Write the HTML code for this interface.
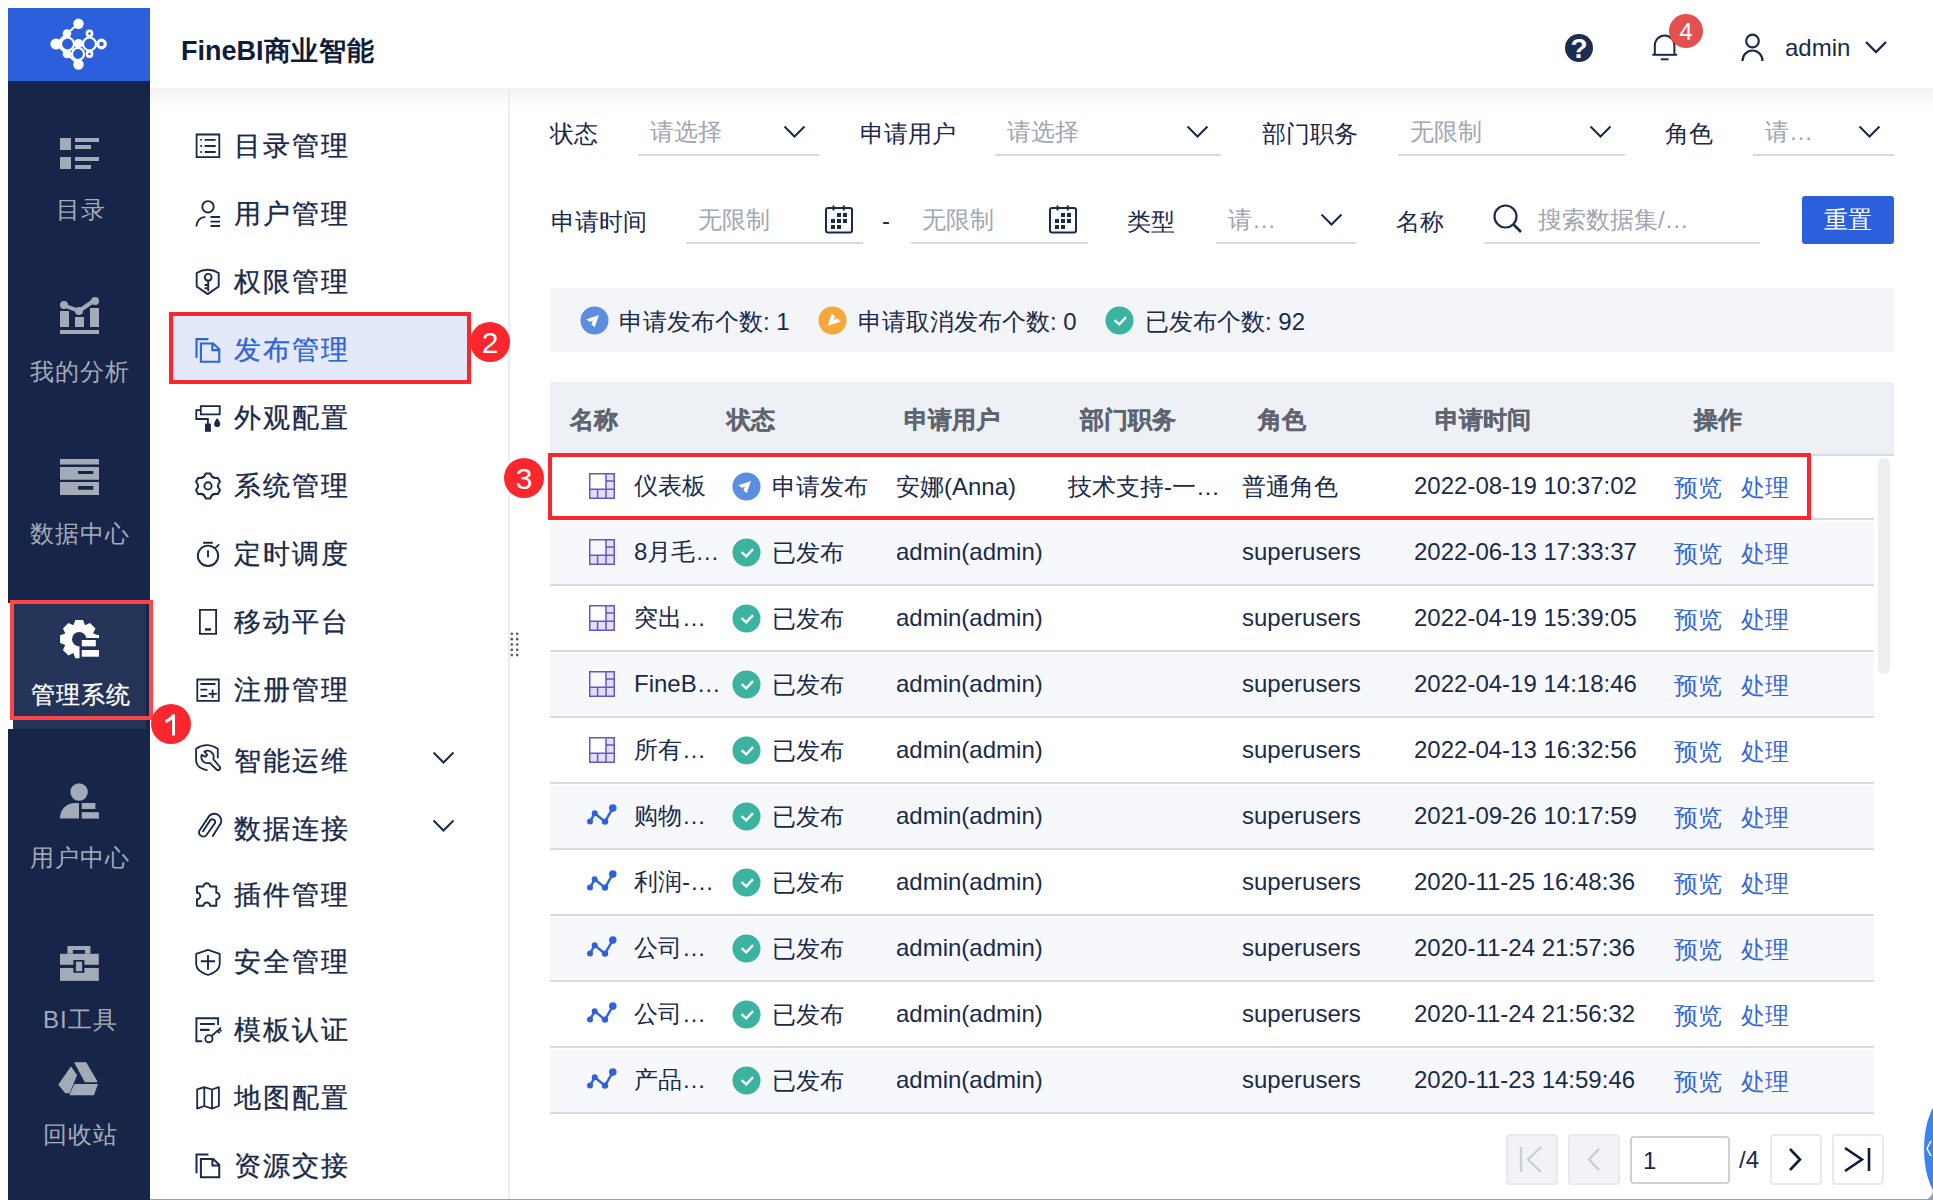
<!DOCTYPE html><html><head><meta charset="utf-8"><style>
html,body{margin:0;padding:0;width:1933px;height:1200px;overflow:hidden;background:#fff;position:relative;font-family:"Liberation Sans",sans-serif}
.t{position:absolute;white-space:nowrap;line-height:40px}
</style></head><body>
<div style="position:absolute;left:8px;top:8px;width:142px;height:73px;background:#2b5fdb"></div>
<div style="position:absolute;left:8px;top:81px;width:142px;height:1119px;background:#172548"></div>
<svg style="position:absolute;left:45px;top:15px;" width="65" height="60" viewBox="0 0 65 60"><g fill="#fff" stroke="#fff">
<g fill="none" stroke-width="2.2">
<circle cx="22.5" cy="29" r="6.5"/><circle cx="44.5" cy="29" r="6.5"/><circle cx="33" cy="39" r="6"/>
<path d="M33.5 8.75 L22 18.5 L11 29 L22 39 L33.5 49.5"/>
</g>
<circle cx="33.5" cy="8.75" r="5.2" stroke="none"/>
<circle cx="33.5" cy="49.5" r="5.2" stroke="none"/>
<circle cx="11" cy="29" r="5.6" stroke="none"/>
<circle cx="22" cy="18.5" r="4.3" stroke="none"/>
<circle cx="22" cy="39" r="4.3" stroke="none"/>
<circle cx="33.5" cy="28.5" r="4.6" stroke="none"/>
<circle cx="44.5" cy="18.5" r="2.6" fill="#2b5fdb" stroke-width="2.6"/>
<circle cx="44.5" cy="39" r="2.6" fill="#2b5fdb" stroke-width="2.6"/>
<circle cx="56.5" cy="29" r="3.8" fill="#2b5fdb" stroke-width="3.2"/>
</g></svg>
<div style="position:absolute;left:8px;top:603px;width:5px;height:126px;background:#fff"></div>
<div style="position:absolute;left:13px;top:603px;width:133px;height:126px;background:#243459"></div>
<svg style="position:absolute;left:60px;top:138px;" width="40" height="32" viewBox="0 0 40 32"><g fill="#a3aab8"><rect x="0" y="0" width="11" height="12"/><rect x="0" y="19" width="11" height="12"/>
<rect x="15" y="0" width="24" height="4"/><rect x="15" y="7" width="16" height="4"/>
<rect x="15" y="19" width="24" height="4"/><rect x="15" y="27" width="16" height="4"/></g></svg>
<div class="t" style="left:56px;top:190px;font-size:24px;color:#a3aab8;font-weight:normal;letter-spacing:1px;">目录</div>
<svg style="position:absolute;left:60px;top:297px;" width="40" height="37" viewBox="0 0 40 37"><g fill="#a3aab8"><rect x="0" y="14" width="9" height="16"/><rect x="15" y="20" width="9" height="10"/><rect x="30" y="11" width="9" height="19"/>
<rect x="0" y="33" width="39" height="4"/><path d="M3 8 L19 14 L35 3" stroke="#a3aab8" stroke-width="4" fill="none"/>
<circle cx="4" cy="8" r="4"/><circle cx="19" cy="14" r="4"/><circle cx="35" cy="4" r="4"/></g></svg>
<div class="t" style="left:30px;top:352px;font-size:24px;color:#a3aab8;font-weight:normal;letter-spacing:1.0px;">我的分析</div>
<svg style="position:absolute;left:60px;top:459px;" width="40" height="37" viewBox="0 0 40 37"><g fill="#a3aab8"><rect x="0" y="0" width="39" height="5.5"/>
<path d="M0 8 H39 V20.8 H0 Z M18 12 V15 H33.3 V12 Z" fill-rule="evenodd"/>
<path d="M0 23 H39 V36 H0 Z M18 27 V30.7 H33.3 V27 Z" fill-rule="evenodd"/></g></svg>
<div class="t" style="left:30px;top:514px;font-size:24px;color:#a3aab8;font-weight:normal;letter-spacing:1.0px;">数据中心</div>
<svg style="position:absolute;left:55px;top:615px;" width="50" height="50" viewBox="0 0 50 50"><path d="M18.7 9.7 L20.3 5.1 L28.1 5.1 L29.7 9.7 L30.6 10.1 L35.0 7.9 L40.5 13.4 L38.3 17.8 L38.7 18.7 L43.3 20.3 L43.3 28.1 L38.7 29.7 L38.3 30.6 L40.5 35.0 L35.0 40.5 L30.6 38.3 L29.7 38.7 L28.1 43.3 L20.3 43.3 L18.7 38.7 L17.8 38.3 L13.4 40.5 L7.9 35.0 L10.1 30.6 L9.7 29.7 L5.1 28.1 L5.1 20.3 L9.7 18.7 L10.1 17.8 L7.9 13.4 L13.4 7.9 L17.8 10.1 Z" fill="#fff"/><circle cx="24.2" cy="24.2" r="7.2" fill="#243459"/><rect x="24.5" y="23" width="25.5" height="27" fill="#243459"/><rect x="26.8" y="25" width="14" height="6.3" fill="#fff"/><rect x="26.8" y="35" width="17.2" height="6.7" fill="#fff"/><rect x="31" y="20" width="13" height="3" fill="#fff"/></svg>
<div class="t" style="left:30.5px;top:675px;font-size:24px;color:#ffffff;font-weight:normal;letter-spacing:1.0px;-webkit-text-stroke:0.3px #fff">管理系统</div>
<svg style="position:absolute;left:60px;top:783px;" width="40" height="37" viewBox="0 0 40 37"><g fill="#a3aab8"><circle cx="19.1" cy="9" r="8.7"/><path d="M0 35.6 C0 26 6 20 16 20 H19 V35.6 Z"/>
<rect x="21.7" y="20" width="13.7" height="6"/><rect x="21.7" y="29.2" width="17.2" height="6.4"/></g></svg>
<div class="t" style="left:30px;top:838px;font-size:24px;color:#a3aab8;font-weight:normal;letter-spacing:1.0px;">用户中心</div>
<svg style="position:absolute;left:60px;top:945px;" width="40" height="37" viewBox="0 0 40 37"><g fill="#a3aab8"><path d="M7.4 1 H30.4 V8.8 H24.9 V5.1 H12.9 V8.8 H7.4 Z"/>
<rect x="0" y="8.8" width="38.8" height="11"/><rect x="0" y="23" width="38.8" height="12.9"/>
<rect x="13.4" y="15" width="11" height="12.8" fill="#172548"/><rect x="15.9" y="16.6" width="6.2" height="9.6"/></g></svg>
<div class="t" style="left:43px;top:1000px;font-size:24px;color:#a3aab8;font-weight:normal;letter-spacing:1px;">BI工具</div>
<svg style="position:absolute;left:50px;top:1050px;" width="50" height="50" viewBox="0 0 50 50"><g fill="#a3aab8" stroke="#a3aab8" stroke-width="1.2" stroke-linejoin="round"><path d="M25 12.8 H35.8 L46.8 31.6 H35.2 Z"/><path d="M21 17.3 L26.4 25.2 L19.3 42.6 L15.5 42.6 L9 34.5 Z"/><path d="M24.8 34.6 H47.2 L43.6 44.6 H20.2 Z"/></g></svg>
<div class="t" style="left:42.5px;top:1115px;font-size:24px;color:#a3aab8;font-weight:normal;letter-spacing:1.2px;">回收站</div>
<div style="position:absolute;left:150px;top:88px;width:1783px;height:20px;background:linear-gradient(#f1f2f5,#ffffff)"></div>
<div class="t" style="left:181px;top:30.6px;font-size:27px;color:#0e1c3c;font-weight:bold;letter-spacing:0px;">FineBI<span style="letter-spacing:0.9px">商业智能</span></div>
<svg style="position:absolute;left:1565px;top:34px;" width="28" height="28" viewBox="0 0 28 28"><circle cx="14" cy="14" r="14" fill="#1d2d4f"/><text x="14" y="24" text-anchor="middle" font-family="Liberation Sans" font-weight="bold" font-size="28" fill="#fff">?</text></svg>
<svg style="position:absolute;left:1650px;top:30px;" width="32" height="34" viewBox="0 0 32 34"><g fill="none" stroke="#1a2a4a" stroke-width="2"><path d="M4.8 24.8 V15.2 A9.8 9.6 0 0 1 24.4 15.2 V24.8"/><path d="M2.3 24.8 H27.2"/><path d="M10.8 29.3 H18.6"/></g></svg>
<svg style="position:absolute;left:1669px;top:14px;" width="34" height="34" viewBox="0 0 34 34"><circle cx="17" cy="17" r="17" fill="#e45050"/><text x="17" y="26" text-anchor="middle" font-family="Liberation Sans" font-size="24" fill="#fff">4</text></svg>
<svg style="position:absolute;left:1740px;top:33px;" width="26" height="29" viewBox="0 0 26 29"><g fill="none" stroke="#1a2a4a" stroke-width="2.2"><circle cx="12.5" cy="8" r="6.3"/><path d="M2.5 28 A10 10.5 0 0 1 22.5 28"/></g></svg>
<div class="t" style="left:1785px;top:28px;font-size:24px;color:#1a2a4a;font-weight:normal;letter-spacing:0px;">admin</div>
<svg style="position:absolute;left:1864px;top:40px;" width="24" height="15" viewBox="0 0 24 15"><path d="M2 2 L12 12 L22 2" fill="none" stroke="#1a2a4a" stroke-width="2.4"/></svg>
<div style="position:absolute;left:508px;top:88px;width:2px;height:1112px;background:#eceef2"></div>
<div style="position:absolute;left:169px;top:312px;width:302px;height:72px;background:#e2e9fb;border:4px solid #fc262e;box-sizing:border-box"></div>
<div class="t" style="left:234px;top:126.0px;font-size:27px;color:#1a2a4a;font-weight:normal;letter-spacing:2.1px;-webkit-text-stroke:0.3px #1a2a4a">目录管理</div>
<div class="t" style="left:234px;top:194.0px;font-size:27px;color:#1a2a4a;font-weight:normal;letter-spacing:2.1px;-webkit-text-stroke:0.3px #1a2a4a">用户管理</div>
<div class="t" style="left:234px;top:262.0px;font-size:27px;color:#1a2a4a;font-weight:normal;letter-spacing:2.1px;-webkit-text-stroke:0.3px #1a2a4a">权限管理</div>
<div class="t" style="left:234px;top:330.0px;font-size:27px;color:#2f63d8;font-weight:normal;letter-spacing:2.1px;-webkit-text-stroke:0.3px #2f63d8">发布管理</div>
<div class="t" style="left:234px;top:398.0px;font-size:27px;color:#1a2a4a;font-weight:normal;letter-spacing:2.1px;-webkit-text-stroke:0.3px #1a2a4a">外观配置</div>
<div class="t" style="left:234px;top:466.0px;font-size:27px;color:#1a2a4a;font-weight:normal;letter-spacing:2.1px;-webkit-text-stroke:0.3px #1a2a4a">系统管理</div>
<div class="t" style="left:234px;top:534.0px;font-size:27px;color:#1a2a4a;font-weight:normal;letter-spacing:2.1px;-webkit-text-stroke:0.3px #1a2a4a">定时调度</div>
<div class="t" style="left:234px;top:602.0px;font-size:27px;color:#1a2a4a;font-weight:normal;letter-spacing:2.1px;-webkit-text-stroke:0.3px #1a2a4a">移动平台</div>
<div class="t" style="left:234px;top:670.0px;font-size:27px;color:#1a2a4a;font-weight:normal;letter-spacing:2.1px;-webkit-text-stroke:0.3px #1a2a4a">注册管理</div>
<div class="t" style="left:234px;top:740.5px;font-size:27px;color:#1a2a4a;font-weight:normal;letter-spacing:2.1px;-webkit-text-stroke:0.3px #1a2a4a">智能运维</div>
<div class="t" style="left:234px;top:808.5px;font-size:27px;color:#1a2a4a;font-weight:normal;letter-spacing:2.1px;-webkit-text-stroke:0.3px #1a2a4a">数据连接</div>
<div class="t" style="left:234px;top:874.5px;font-size:27px;color:#1a2a4a;font-weight:normal;letter-spacing:2.1px;-webkit-text-stroke:0.3px #1a2a4a">插件管理</div>
<div class="t" style="left:234px;top:941.5px;font-size:27px;color:#1a2a4a;font-weight:normal;letter-spacing:2.1px;-webkit-text-stroke:0.3px #1a2a4a">安全管理</div>
<div class="t" style="left:234px;top:1009.5px;font-size:27px;color:#1a2a4a;font-weight:normal;letter-spacing:2.1px;-webkit-text-stroke:0.3px #1a2a4a">模板认证</div>
<div class="t" style="left:234px;top:1077.5px;font-size:27px;color:#1a2a4a;font-weight:normal;letter-spacing:2.1px;-webkit-text-stroke:0.3px #1a2a4a">地图配置</div>
<div class="t" style="left:234px;top:1145.5px;font-size:27px;color:#1a2a4a;font-weight:normal;letter-spacing:2.1px;-webkit-text-stroke:0.3px #1a2a4a">资源交接</div>
<svg style="position:absolute;left:185px;top:120px" width="45" height="1080" viewBox="185 120 45 1080"><path d="M196.6 134.5 H219.3 V157.1 H196.6 Z" fill="none" stroke="#1a2a4a" stroke-width="1.8"/><path d="M200.3 139.9 H201.9 M204.6 139.9 H215.7 M200.3 146 H201.9 M204.6 146 H215.7 M200.3 152 H201.9 M204.6 152 H215.7 " fill="none" stroke="#1a2a4a" stroke-width="1.9"/><circle cx="208" cy="206.8" r="5.7" fill="none" stroke="#1a2a4a" stroke-width="1.9"/><path d="M196.3 226.5 C196.8 221 200 217.5 205.4 216.9 M210.5 217 H220.1 M210.5 221.6 H220.1 M210.5 226 H220.1" fill="none" stroke="#1a2a4a" stroke-width="1.9"/><path d="M196.7 273 Q207.7 266.5 218.7 273 V286.5 L207.7 294.1 L196.7 286.5 Z" fill="none" stroke="#1a2a4a" stroke-width="1.9" stroke-linejoin="round"/><circle cx="208.2" cy="277.3" r="3.4" fill="none" stroke="#1a2a4a" stroke-width="1.9"/><path d="M208.2 280.7 V291.2 M204.6 285 H208.2 M204.6 288.3 H208.2" fill="none" stroke="#1a2a4a" stroke-width="1.9"/><path d="M196.5 358 V339.1 H208.4 M200.9 343.5 H213.2 L219.25 349.3 V361.8 H200.9 Z M212.4 343.5 V350.1 H219.25" fill="none" stroke="#2f63d8" stroke-width="2.1"/><path d="M200.8 406.1 H219.7 V414.4 H200.8 Z M200.8 410.2 H196.3 V419 H207.9 V424" fill="none" stroke="#1a2a4a" stroke-width="1.8"/><rect x="205" y="423.6" width="5.9" height="8.2" fill="#1a2a4a"/><path d="M217.2 418 C219.5 421 220.3 422.8 220.3 424 A3.1 3.1 0 0 1 214.1 424 C214.1 422.8 214.9 421 217.2 418 Z" fill="#1a2a4a"/><path d="M205.70 473.40 L210.30 473.40 Q211.95 479.06 217.68 477.66 L219.98 481.64 Q215.90 485.90 219.98 490.16 L217.68 494.14 Q211.95 492.74 210.30 498.40 L205.70 498.40 Q204.05 492.74 198.32 494.14 L196.02 490.16 Q200.10 485.90 196.02 481.64 L198.32 477.66 Q204.05 479.06 205.70 473.40 Z" fill="none" stroke="#1a2a4a" stroke-width="2" stroke-linejoin="round"/><circle cx="208" cy="485.9" r="3.6" fill="none" stroke="#1a2a4a" stroke-width="1.9"/><circle cx="208" cy="555.8" r="10.2" fill="none" stroke="#1a2a4a" stroke-width="1.9"/><path d="M203.1 542.8 H212.8 M208 550.3 V557.2 M215.3 547.9 L219.2 544.4" fill="none" stroke="#1a2a4a" stroke-width="1.9"/><path d="M199.9 609.9 H216.1 V633.9 H199.9 Z" fill="none" stroke="#1a2a4a" stroke-width="1.8"/><path d="M205 629.45 H211" fill="none" stroke="#1a2a4a" stroke-width="2.5"/><path d="M197.3 679.5 H218.8 V700.8 H197.3 Z M200.4 684 H215.5 M200.4 689.7 H207.3 M200.4 696 H207.3 M208.6 693.9 H216.9 M212.6 689.6 V698" fill="none" stroke="#1a2a4a" stroke-width="1.8"/><path d="M217.8 758.3 V748.7 C213 746 210 745.2 207 745.2 C204 745.2 200 746 196.1 748.7 V760 C196.1 765.5 200.5 769 207.5 770.3" fill="none" stroke="#1a2a4a" stroke-width="1.8"/><path d="M204.4 751.6 L207.2 754.8 L205.3 756.8 L201.7 754.9 A6.2 6.2 0 0 0 209.6 762.8 L216.5 769.5 A2.1 2.1 0 0 0 219.5 766.5 L213.3 759.1 A6.2 6.2 0 0 0 204.4 751.6 Z" fill="none" stroke="#1a2a4a" stroke-width="1.8" stroke-linejoin="round"/><path d="M212.8 836 L219 826 A5.6 5.6 0 0 0 209.6 815.5 L199.5 830.5 A4.2 4.2 0 0 0 206.5 835 L215 823 A2.8 2.8 0 0 0 210.3 820.2 L203 831.3" fill="none" stroke="#1a2a4a" stroke-width="1.9" stroke-linecap="round"/><path d="M197 886.5 H203.5 A3.3 3.3 0 1 1 210.1 886.5 H216.3 V892.7 A3.3 3.3 0 1 1 216.3 899.3 V905.8 H210.1 A3.3 3.3 0 0 0 203.5 905.8 H197 V899.3 A3.3 3.3 0 0 0 197 892.7 Z" fill="none" stroke="#1a2a4a" stroke-width="1.9" stroke-linejoin="round"/><path d="M208 949.8 L219.7 953.8 V964 C219.7 969 214 973 208 975 C202 973 196.2 969 196.2 964 V953.8 Z" fill="none" stroke="#1a2a4a" stroke-width="1.8" stroke-linejoin="round"/><path d="M200.8 961.2 H215.1 M208 955 V969.7" fill="none" stroke="#1a2a4a" stroke-width="1.9"/><path d="M202.2 1041.2 H196.4 V1018.3 H218.1 V1025" fill="none" stroke="#1a2a4a" stroke-width="1.9"/><path d="M199.9 1024 H214.8 M199.9 1029.8 H209.6" fill="none" stroke="#1a2a4a" stroke-width="2.2"/><circle cx="208.9" cy="1038.7" r="3.6" fill="none" stroke="#1a2a4a" stroke-width="1.9"/><path d="M211.6 1036 L221 1027.7 M217.4 1031 L219.7 1033.2 M219.2 1029.1 L221.5 1031.4" fill="none" stroke="#1a2a4a" stroke-width="1.8"/><path d="M197.2 1089.3 L204.3 1087.2 L212 1089.5 L218.9 1087.2 V1106 L212 1108.6 L204.3 1106 L197.2 1108.6 Z M204.3 1087.2 V1106 M212 1089.5 V1108.6" fill="none" stroke="#1a2a4a" stroke-width="1.8" stroke-linejoin="round"/><path d="M196.5 1173.3 V1154.6 H208.4 M200.9 1159 H213.2 L219.25 1164.8 V1177.3 H200.9 Z M212.4 1159 V1165.6 H219.25" fill="none" stroke="#1a2a4a" stroke-width="2"/></svg>
<svg style="position:absolute;left:432px;top:751px;" width="24" height="14" viewBox="0 0 24 14"><path d="M1.5 1.5 L11.5 11.5 L21.5 1.5" fill="none" stroke="#1a2a4a" stroke-width="2"/></svg>
<svg style="position:absolute;left:432px;top:819px;" width="24" height="14" viewBox="0 0 24 14"><path d="M1.5 1.5 L11.5 11.5 L21.5 1.5" fill="none" stroke="#1a2a4a" stroke-width="2"/></svg>
<svg style="position:absolute;left:510px;top:632px;" width="10" height="26" viewBox="0 0 10 26"><circle cx="1.8" cy="1.80" r="1.3" fill="#4a5670"/><circle cx="1.8" cy="7.13" r="1.3" fill="#4a5670"/><circle cx="1.8" cy="12.46" r="1.3" fill="#4a5670"/><circle cx="1.8" cy="17.79" r="1.3" fill="#4a5670"/><circle cx="1.8" cy="23.12" r="1.3" fill="#4a5670"/><circle cx="7.2" cy="1.80" r="1.3" fill="#4a5670"/><circle cx="7.2" cy="7.13" r="1.3" fill="#4a5670"/><circle cx="7.2" cy="12.46" r="1.3" fill="#4a5670"/><circle cx="7.2" cy="17.79" r="1.3" fill="#4a5670"/><circle cx="7.2" cy="23.12" r="1.3" fill="#4a5670"/></svg>
<div class="t" style="left:550px;top:114px;font-size:24px;color:#1a2a4a;font-weight:normal;letter-spacing:0px;">状态</div>
<div style="position:absolute;left:638px;top:154px;width:181px;height:2px;background:#d6dae1"></div>
<div class="t" style="left:650px;top:112px;font-size:24px;color:#a0a6b0;font-weight:normal;letter-spacing:0px;">请选择</div>
<svg style="position:absolute;left:783px;top:125px;" width="24" height="14" viewBox="0 0 24 14"><path d="M1.5 1.5 L11.5 11.5 L21.5 1.5" fill="none" stroke="#1a2a4a" stroke-width="2"/></svg>
<div class="t" style="left:860px;top:114px;font-size:24px;color:#1a2a4a;font-weight:normal;letter-spacing:0px;">申请用户</div>
<div style="position:absolute;left:995px;top:154px;width:226px;height:2px;background:#d6dae1"></div>
<div class="t" style="left:1007px;top:112px;font-size:24px;color:#a0a6b0;font-weight:normal;letter-spacing:0px;">请选择</div>
<svg style="position:absolute;left:1186px;top:125px;" width="24" height="14" viewBox="0 0 24 14"><path d="M1.5 1.5 L11.5 11.5 L21.5 1.5" fill="none" stroke="#1a2a4a" stroke-width="2"/></svg>
<div class="t" style="left:1262px;top:114px;font-size:24px;color:#1a2a4a;font-weight:normal;letter-spacing:0px;">部门职务</div>
<div style="position:absolute;left:1398px;top:154px;width:227px;height:2px;background:#d6dae1"></div>
<div class="t" style="left:1410px;top:112px;font-size:24px;color:#a0a6b0;font-weight:normal;letter-spacing:0px;">无限制</div>
<svg style="position:absolute;left:1589px;top:125px;" width="24" height="14" viewBox="0 0 24 14"><path d="M1.5 1.5 L11.5 11.5 L21.5 1.5" fill="none" stroke="#1a2a4a" stroke-width="2"/></svg>
<div class="t" style="left:1665px;top:114px;font-size:24px;color:#1a2a4a;font-weight:normal;letter-spacing:0px;">角色</div>
<div style="position:absolute;left:1753px;top:154px;width:141px;height:2px;background:#d6dae1"></div>
<div class="t" style="left:1765px;top:112px;font-size:24px;color:#a0a6b0;font-weight:normal;letter-spacing:0px;">请…</div>
<svg style="position:absolute;left:1858px;top:125px;" width="24" height="14" viewBox="0 0 24 14"><path d="M1.5 1.5 L11.5 11.5 L21.5 1.5" fill="none" stroke="#1a2a4a" stroke-width="2"/></svg>
<div class="t" style="left:551px;top:202px;font-size:24px;color:#1a2a4a;font-weight:normal;letter-spacing:0px;">申请时间</div>
<div style="position:absolute;left:686px;top:242px;width:177px;height:2px;background:#d6dae1"></div>
<div class="t" style="left:698px;top:200px;font-size:24px;color:#a0a6b0;font-weight:normal;letter-spacing:0px;">无限制</div>
<svg style="position:absolute;left:825px;top:205px;" width="28" height="29" viewBox="0 0 28 29"><rect x="1" y="3" width="26" height="24.5" rx="2" fill="none" stroke="#1a2a4a" stroke-width="2"/><path d="M8.5 0.5 V5.5 M18.75 0.5 V5.5" stroke="#1a2a4a" stroke-width="2"/><rect x="12" y="8" width="4" height="4" fill="#1a2a4a"/><rect x="18" y="8" width="4" height="4" fill="#1a2a4a"/><rect x="6" y="14" width="4" height="4" fill="#1a2a4a"/><rect x="12" y="14" width="4" height="4" fill="#1a2a4a"/><rect x="18" y="14" width="4" height="4" fill="#1a2a4a"/><rect x="6" y="20" width="4" height="4" fill="#1a2a4a"/><rect x="12" y="20" width="4" height="4" fill="#1a2a4a"/></svg>
<div class="t" style="left:882px;top:201px;font-size:24px;color:#1a2a4a;font-weight:normal;letter-spacing:0px;">-</div>
<div style="position:absolute;left:911px;top:242px;width:177px;height:2px;background:#d6dae1"></div>
<div class="t" style="left:922px;top:200px;font-size:24px;color:#a0a6b0;font-weight:normal;letter-spacing:0px;">无限制</div>
<svg style="position:absolute;left:1049px;top:205px;" width="28" height="29" viewBox="0 0 28 29"><rect x="1" y="3" width="26" height="24.5" rx="2" fill="none" stroke="#1a2a4a" stroke-width="2"/><path d="M8.5 0.5 V5.5 M18.75 0.5 V5.5" stroke="#1a2a4a" stroke-width="2"/><rect x="12" y="8" width="4" height="4" fill="#1a2a4a"/><rect x="18" y="8" width="4" height="4" fill="#1a2a4a"/><rect x="6" y="14" width="4" height="4" fill="#1a2a4a"/><rect x="12" y="14" width="4" height="4" fill="#1a2a4a"/><rect x="18" y="14" width="4" height="4" fill="#1a2a4a"/><rect x="6" y="20" width="4" height="4" fill="#1a2a4a"/><rect x="12" y="20" width="4" height="4" fill="#1a2a4a"/></svg>
<div class="t" style="left:1127px;top:202px;font-size:24px;color:#1a2a4a;font-weight:normal;letter-spacing:0px;">类型</div>
<div style="position:absolute;left:1216px;top:242px;width:140px;height:2px;background:#d6dae1"></div>
<div class="t" style="left:1228px;top:200px;font-size:24px;color:#a0a6b0;font-weight:normal;letter-spacing:0px;">请…</div>
<svg style="position:absolute;left:1320px;top:213px;" width="24" height="14" viewBox="0 0 24 14"><path d="M1.5 1.5 L11.5 11.5 L21.5 1.5" fill="none" stroke="#1a2a4a" stroke-width="2"/></svg>
<div class="t" style="left:1396px;top:202px;font-size:24px;color:#1a2a4a;font-weight:normal;letter-spacing:0px;">名称</div>
<div style="position:absolute;left:1484px;top:242px;width:276px;height:2px;background:#d6dae1"></div>
<svg style="position:absolute;left:1493px;top:204px;" width="31" height="31" viewBox="0 0 31 31"><circle cx="12.5" cy="12.5" r="11" fill="none" stroke="#1a2a4a" stroke-width="2.2"/><path d="M20.5 20.5 L28 28" stroke="#1a2a4a" stroke-width="2.6"/></svg>
<div class="t" style="left:1538px;top:200px;font-size:24px;color:#a0a6b0;font-weight:normal;letter-spacing:0px;">搜索数据集/…</div>
<div style="position:absolute;left:1802px;top:196px;width:92px;height:48px;background:#2b5fdb;border-radius:3px"></div>
<div class="t" style="left:1824px;top:200px;font-size:24px;color:#ffffff;font-weight:normal;letter-spacing:0px;">重置</div>
<div style="position:absolute;left:550px;top:288px;width:1344px;height:64px;background:#f3f5f9"></div>
<svg style="position:absolute;left:580px;top:305.5px;" width="29" height="29" viewBox="0 0 29 29"><circle cx="14.5" cy="14.5" r="14" fill="#5b8de0"/><path d="M19 9 L6.3 13.2 L9.7 15.7 L13 14.8 L11.3 18.3 L14.7 21.3 Z" fill="#fff"/></svg>
<div class="t" style="left:619px;top:302px;font-size:24px;color:#1a2a4a;font-weight:normal;letter-spacing:0px;">申请发布个数: 1</div>
<svg style="position:absolute;left:818px;top:305.5px;" width="29" height="29" viewBox="0 0 29 29"><circle cx="14.5" cy="14.5" r="14" fill="#f7a63a"/><path d="M13.8 7.2 L9.7 19.8 L22.7 15.7 L19.3 12.3 L15.7 14 L17 10.3 Z" fill="#fff"/></svg>
<div class="t" style="left:858px;top:302px;font-size:24px;color:#1a2a4a;font-weight:normal;letter-spacing:0px;">申请取消发布个数: 0</div>
<svg style="position:absolute;left:1105px;top:305.5px;" width="29" height="29" viewBox="0 0 29 29"><circle cx="14.5" cy="14.5" r="14" fill="#3bb3a0"/><path d="M9.6 14.2 L14.2 18.3 L21 11.1" fill="none" stroke="#fff" stroke-width="2.3"/></svg>
<div class="t" style="left:1145px;top:302px;font-size:24px;color:#1a2a4a;font-weight:normal;letter-spacing:0px;">已发布个数: 92</div>
<div style="position:absolute;left:550px;top:382px;width:1344px;height:72px;background:#edf0f5"></div>
<div style="position:absolute;left:550px;top:454px;width:1344px;height:2px;background:#d6dbe3"></div>
<div class="t" style="left:570px;top:400px;font-size:24px;color:#5e6570;font-weight:bold;letter-spacing:0px;-webkit-text-stroke:0.35px #5e6570">名称</div>
<div class="t" style="left:727px;top:400px;font-size:24px;color:#5e6570;font-weight:bold;letter-spacing:0px;-webkit-text-stroke:0.35px #5e6570">状态</div>
<div class="t" style="left:904px;top:400px;font-size:24px;color:#5e6570;font-weight:bold;letter-spacing:0px;-webkit-text-stroke:0.35px #5e6570">申请用户</div>
<div class="t" style="left:1080px;top:400px;font-size:24px;color:#5e6570;font-weight:bold;letter-spacing:0px;-webkit-text-stroke:0.35px #5e6570">部门职务</div>
<div class="t" style="left:1258px;top:400px;font-size:24px;color:#5e6570;font-weight:bold;letter-spacing:0px;-webkit-text-stroke:0.35px #5e6570">角色</div>
<div class="t" style="left:1435px;top:400px;font-size:24px;color:#5e6570;font-weight:bold;letter-spacing:0px;-webkit-text-stroke:0.35px #5e6570">申请时间</div>
<div class="t" style="left:1694px;top:400px;font-size:24px;color:#5e6570;font-weight:bold;letter-spacing:0px;-webkit-text-stroke:0.35px #5e6570">操作</div>
<div style="position:absolute;left:550px;top:518px;width:1324px;height:2px;background:#d6dbe3"></div>
<svg style="position:absolute;left:589px;top:473px;" width="26" height="26" viewBox="0 0 26 26"><rect x="17" y="0.75" width="8.25" height="24.5" fill="#e2dff9"/><rect x="0.75" y="16.2" width="24.5" height="9" fill="#e2dff9"/><g fill="none" stroke="#6656c4" stroke-width="1.5"><rect x="0.75" y="0.75" width="24.5" height="24.5"/><path d="M0.75 16.2 H25.25 M17 0.75 V25.25 M8.6 16.2 V25.25 M17 7.9 H25.25"/></g></svg>
<div class="t" style="left:634px;top:466px;font-size:24px;color:#1a2a4a;font-weight:normal;letter-spacing:0px;">仪表板</div>
<svg style="position:absolute;left:732px;top:472px;" width="29" height="29" viewBox="0 0 29 29"><circle cx="14.5" cy="14.5" r="14" fill="#5b8de0"/><path d="M19 9 L6.3 13.2 L9.7 15.7 L13 14.8 L11.3 18.3 L14.7 21.3 Z" fill="#fff"/></svg>
<div class="t" style="left:772px;top:467.2px;font-size:24px;color:#1a2a4a;font-weight:normal;letter-spacing:0px;">申请发布</div>
<div class="t" style="left:896px;top:467.2px;font-size:24px;color:#1a2a4a;font-weight:normal;letter-spacing:0px;">安娜(Anna)</div>
<div class="t" style="left:1068px;top:467px;font-size:24px;color:#1a2a4a;font-weight:normal;letter-spacing:0px;">技术支持-一…</div>
<div class="t" style="left:1242px;top:467px;font-size:24px;color:#1a2a4a;font-weight:normal;letter-spacing:0px;">普通角色</div>
<div class="t" style="left:1414px;top:466px;font-size:24px;color:#1a2a4a;font-weight:normal;letter-spacing:0px;">2022-08-19 10:37:02</div>
<div class="t" style="left:1674px;top:467.8px;font-size:24px;color:#3366dd;font-weight:normal;letter-spacing:0px;">预览</div>
<div class="t" style="left:1741px;top:467.8px;font-size:24px;color:#3366dd;font-weight:normal;letter-spacing:0px;">处理</div>
<div style="position:absolute;left:550px;top:522px;width:1324px;height:64px;background:#f7f8fc"></div>
<div style="position:absolute;left:550px;top:584px;width:1324px;height:2px;background:#d6dbe3"></div>
<svg style="position:absolute;left:589px;top:539px;" width="26" height="26" viewBox="0 0 26 26"><rect x="17" y="0.75" width="8.25" height="24.5" fill="#e2dff9"/><rect x="0.75" y="16.2" width="24.5" height="9" fill="#e2dff9"/><g fill="none" stroke="#6656c4" stroke-width="1.5"><rect x="0.75" y="0.75" width="24.5" height="24.5"/><path d="M0.75 16.2 H25.25 M17 0.75 V25.25 M8.6 16.2 V25.25 M17 7.9 H25.25"/></g></svg>
<div class="t" style="left:634px;top:532px;font-size:24px;color:#1a2a4a;font-weight:normal;letter-spacing:0px;">8月毛…</div>
<svg style="position:absolute;left:732px;top:538px;" width="29" height="29" viewBox="0 0 29 29"><circle cx="14.5" cy="14.5" r="14" fill="#3bb3a0"/><path d="M9.6 14.2 L14.2 18.3 L21 11.1" fill="none" stroke="#fff" stroke-width="2.3"/></svg>
<div class="t" style="left:772px;top:533.2px;font-size:24px;color:#1a2a4a;font-weight:normal;letter-spacing:0px;">已发布</div>
<div class="t" style="left:896px;top:532px;font-size:24px;color:#1a2a4a;font-weight:normal;letter-spacing:0px;">admin(admin)</div>
<div class="t" style="left:1242px;top:532px;font-size:24px;color:#1a2a4a;font-weight:normal;letter-spacing:0px;">superusers</div>
<div class="t" style="left:1414px;top:532px;font-size:24px;color:#1a2a4a;font-weight:normal;letter-spacing:0px;">2022-06-13 17:33:37</div>
<div class="t" style="left:1674px;top:533.8px;font-size:24px;color:#3366dd;font-weight:normal;letter-spacing:0px;">预览</div>
<div class="t" style="left:1741px;top:533.8px;font-size:24px;color:#3366dd;font-weight:normal;letter-spacing:0px;">处理</div>
<div style="position:absolute;left:550px;top:650px;width:1324px;height:2px;background:#d6dbe3"></div>
<svg style="position:absolute;left:589px;top:605px;" width="26" height="26" viewBox="0 0 26 26"><rect x="17" y="0.75" width="8.25" height="24.5" fill="#e2dff9"/><rect x="0.75" y="16.2" width="24.5" height="9" fill="#e2dff9"/><g fill="none" stroke="#6656c4" stroke-width="1.5"><rect x="0.75" y="0.75" width="24.5" height="24.5"/><path d="M0.75 16.2 H25.25 M17 0.75 V25.25 M8.6 16.2 V25.25 M17 7.9 H25.25"/></g></svg>
<div class="t" style="left:634px;top:598px;font-size:24px;color:#1a2a4a;font-weight:normal;letter-spacing:0px;">突出…</div>
<svg style="position:absolute;left:732px;top:604px;" width="29" height="29" viewBox="0 0 29 29"><circle cx="14.5" cy="14.5" r="14" fill="#3bb3a0"/><path d="M9.6 14.2 L14.2 18.3 L21 11.1" fill="none" stroke="#fff" stroke-width="2.3"/></svg>
<div class="t" style="left:772px;top:599.2px;font-size:24px;color:#1a2a4a;font-weight:normal;letter-spacing:0px;">已发布</div>
<div class="t" style="left:896px;top:598px;font-size:24px;color:#1a2a4a;font-weight:normal;letter-spacing:0px;">admin(admin)</div>
<div class="t" style="left:1242px;top:598px;font-size:24px;color:#1a2a4a;font-weight:normal;letter-spacing:0px;">superusers</div>
<div class="t" style="left:1414px;top:598px;font-size:24px;color:#1a2a4a;font-weight:normal;letter-spacing:0px;">2022-04-19 15:39:05</div>
<div class="t" style="left:1674px;top:599.8px;font-size:24px;color:#3366dd;font-weight:normal;letter-spacing:0px;">预览</div>
<div class="t" style="left:1741px;top:599.8px;font-size:24px;color:#3366dd;font-weight:normal;letter-spacing:0px;">处理</div>
<div style="position:absolute;left:550px;top:654px;width:1324px;height:64px;background:#f7f8fc"></div>
<div style="position:absolute;left:550px;top:716px;width:1324px;height:2px;background:#d6dbe3"></div>
<svg style="position:absolute;left:589px;top:671px;" width="26" height="26" viewBox="0 0 26 26"><rect x="17" y="0.75" width="8.25" height="24.5" fill="#e2dff9"/><rect x="0.75" y="16.2" width="24.5" height="9" fill="#e2dff9"/><g fill="none" stroke="#6656c4" stroke-width="1.5"><rect x="0.75" y="0.75" width="24.5" height="24.5"/><path d="M0.75 16.2 H25.25 M17 0.75 V25.25 M8.6 16.2 V25.25 M17 7.9 H25.25"/></g></svg>
<div class="t" style="left:634px;top:664px;font-size:24px;color:#1a2a4a;font-weight:normal;letter-spacing:0px;">FineB…</div>
<svg style="position:absolute;left:732px;top:670px;" width="29" height="29" viewBox="0 0 29 29"><circle cx="14.5" cy="14.5" r="14" fill="#3bb3a0"/><path d="M9.6 14.2 L14.2 18.3 L21 11.1" fill="none" stroke="#fff" stroke-width="2.3"/></svg>
<div class="t" style="left:772px;top:665.2px;font-size:24px;color:#1a2a4a;font-weight:normal;letter-spacing:0px;">已发布</div>
<div class="t" style="left:896px;top:664px;font-size:24px;color:#1a2a4a;font-weight:normal;letter-spacing:0px;">admin(admin)</div>
<div class="t" style="left:1242px;top:664px;font-size:24px;color:#1a2a4a;font-weight:normal;letter-spacing:0px;">superusers</div>
<div class="t" style="left:1414px;top:664px;font-size:24px;color:#1a2a4a;font-weight:normal;letter-spacing:0px;">2022-04-19 14:18:46</div>
<div class="t" style="left:1674px;top:665.8px;font-size:24px;color:#3366dd;font-weight:normal;letter-spacing:0px;">预览</div>
<div class="t" style="left:1741px;top:665.8px;font-size:24px;color:#3366dd;font-weight:normal;letter-spacing:0px;">处理</div>
<div style="position:absolute;left:550px;top:782px;width:1324px;height:2px;background:#d6dbe3"></div>
<svg style="position:absolute;left:589px;top:737px;" width="26" height="26" viewBox="0 0 26 26"><rect x="17" y="0.75" width="8.25" height="24.5" fill="#e2dff9"/><rect x="0.75" y="16.2" width="24.5" height="9" fill="#e2dff9"/><g fill="none" stroke="#6656c4" stroke-width="1.5"><rect x="0.75" y="0.75" width="24.5" height="24.5"/><path d="M0.75 16.2 H25.25 M17 0.75 V25.25 M8.6 16.2 V25.25 M17 7.9 H25.25"/></g></svg>
<div class="t" style="left:634px;top:730px;font-size:24px;color:#1a2a4a;font-weight:normal;letter-spacing:0px;">所有…</div>
<svg style="position:absolute;left:732px;top:736px;" width="29" height="29" viewBox="0 0 29 29"><circle cx="14.5" cy="14.5" r="14" fill="#3bb3a0"/><path d="M9.6 14.2 L14.2 18.3 L21 11.1" fill="none" stroke="#fff" stroke-width="2.3"/></svg>
<div class="t" style="left:772px;top:731.2px;font-size:24px;color:#1a2a4a;font-weight:normal;letter-spacing:0px;">已发布</div>
<div class="t" style="left:896px;top:730px;font-size:24px;color:#1a2a4a;font-weight:normal;letter-spacing:0px;">admin(admin)</div>
<div class="t" style="left:1242px;top:730px;font-size:24px;color:#1a2a4a;font-weight:normal;letter-spacing:0px;">superusers</div>
<div class="t" style="left:1414px;top:730px;font-size:24px;color:#1a2a4a;font-weight:normal;letter-spacing:0px;">2022-04-13 16:32:56</div>
<div class="t" style="left:1674px;top:731.8px;font-size:24px;color:#3366dd;font-weight:normal;letter-spacing:0px;">预览</div>
<div class="t" style="left:1741px;top:731.8px;font-size:24px;color:#3366dd;font-weight:normal;letter-spacing:0px;">处理</div>
<div style="position:absolute;left:550px;top:786px;width:1324px;height:64px;background:#f7f8fc"></div>
<div style="position:absolute;left:550px;top:848px;width:1324px;height:2px;background:#d6dbe3"></div>
<svg style="position:absolute;left:586px;top:804px;" width="31" height="24" viewBox="0 0 31 24"><g fill="#2d62dc"><path d="M4 17.6 L8.7 9.3 L19 17.6 L26.8 4.1" fill="none" stroke="#2d62dc" stroke-width="2.4"/><circle cx="4" cy="17.6" r="3"/><circle cx="8.7" cy="9.3" r="3"/><circle cx="19" cy="17.6" r="3.2"/><circle cx="26.8" cy="4.1" r="3.8"/></g></svg>
<div class="t" style="left:634px;top:796px;font-size:24px;color:#1a2a4a;font-weight:normal;letter-spacing:0px;">购物…</div>
<svg style="position:absolute;left:732px;top:802px;" width="29" height="29" viewBox="0 0 29 29"><circle cx="14.5" cy="14.5" r="14" fill="#3bb3a0"/><path d="M9.6 14.2 L14.2 18.3 L21 11.1" fill="none" stroke="#fff" stroke-width="2.3"/></svg>
<div class="t" style="left:772px;top:797.2px;font-size:24px;color:#1a2a4a;font-weight:normal;letter-spacing:0px;">已发布</div>
<div class="t" style="left:896px;top:796px;font-size:24px;color:#1a2a4a;font-weight:normal;letter-spacing:0px;">admin(admin)</div>
<div class="t" style="left:1242px;top:796px;font-size:24px;color:#1a2a4a;font-weight:normal;letter-spacing:0px;">superusers</div>
<div class="t" style="left:1414px;top:796px;font-size:24px;color:#1a2a4a;font-weight:normal;letter-spacing:0px;">2021-09-26 10:17:59</div>
<div class="t" style="left:1674px;top:797.8px;font-size:24px;color:#3366dd;font-weight:normal;letter-spacing:0px;">预览</div>
<div class="t" style="left:1741px;top:797.8px;font-size:24px;color:#3366dd;font-weight:normal;letter-spacing:0px;">处理</div>
<div style="position:absolute;left:550px;top:914px;width:1324px;height:2px;background:#d6dbe3"></div>
<svg style="position:absolute;left:586px;top:870px;" width="31" height="24" viewBox="0 0 31 24"><g fill="#2d62dc"><path d="M4 17.6 L8.7 9.3 L19 17.6 L26.8 4.1" fill="none" stroke="#2d62dc" stroke-width="2.4"/><circle cx="4" cy="17.6" r="3"/><circle cx="8.7" cy="9.3" r="3"/><circle cx="19" cy="17.6" r="3.2"/><circle cx="26.8" cy="4.1" r="3.8"/></g></svg>
<div class="t" style="left:634px;top:862px;font-size:24px;color:#1a2a4a;font-weight:normal;letter-spacing:0px;">利润-…</div>
<svg style="position:absolute;left:732px;top:868px;" width="29" height="29" viewBox="0 0 29 29"><circle cx="14.5" cy="14.5" r="14" fill="#3bb3a0"/><path d="M9.6 14.2 L14.2 18.3 L21 11.1" fill="none" stroke="#fff" stroke-width="2.3"/></svg>
<div class="t" style="left:772px;top:863.2px;font-size:24px;color:#1a2a4a;font-weight:normal;letter-spacing:0px;">已发布</div>
<div class="t" style="left:896px;top:862px;font-size:24px;color:#1a2a4a;font-weight:normal;letter-spacing:0px;">admin(admin)</div>
<div class="t" style="left:1242px;top:862px;font-size:24px;color:#1a2a4a;font-weight:normal;letter-spacing:0px;">superusers</div>
<div class="t" style="left:1414px;top:862px;font-size:24px;color:#1a2a4a;font-weight:normal;letter-spacing:0px;">2020-11-25 16:48:36</div>
<div class="t" style="left:1674px;top:863.8px;font-size:24px;color:#3366dd;font-weight:normal;letter-spacing:0px;">预览</div>
<div class="t" style="left:1741px;top:863.8px;font-size:24px;color:#3366dd;font-weight:normal;letter-spacing:0px;">处理</div>
<div style="position:absolute;left:550px;top:918px;width:1324px;height:64px;background:#f7f8fc"></div>
<div style="position:absolute;left:550px;top:980px;width:1324px;height:2px;background:#d6dbe3"></div>
<svg style="position:absolute;left:586px;top:936px;" width="31" height="24" viewBox="0 0 31 24"><g fill="#2d62dc"><path d="M4 17.6 L8.7 9.3 L19 17.6 L26.8 4.1" fill="none" stroke="#2d62dc" stroke-width="2.4"/><circle cx="4" cy="17.6" r="3"/><circle cx="8.7" cy="9.3" r="3"/><circle cx="19" cy="17.6" r="3.2"/><circle cx="26.8" cy="4.1" r="3.8"/></g></svg>
<div class="t" style="left:634px;top:928px;font-size:24px;color:#1a2a4a;font-weight:normal;letter-spacing:0px;">公司…</div>
<svg style="position:absolute;left:732px;top:934px;" width="29" height="29" viewBox="0 0 29 29"><circle cx="14.5" cy="14.5" r="14" fill="#3bb3a0"/><path d="M9.6 14.2 L14.2 18.3 L21 11.1" fill="none" stroke="#fff" stroke-width="2.3"/></svg>
<div class="t" style="left:772px;top:929.2px;font-size:24px;color:#1a2a4a;font-weight:normal;letter-spacing:0px;">已发布</div>
<div class="t" style="left:896px;top:928px;font-size:24px;color:#1a2a4a;font-weight:normal;letter-spacing:0px;">admin(admin)</div>
<div class="t" style="left:1242px;top:928px;font-size:24px;color:#1a2a4a;font-weight:normal;letter-spacing:0px;">superusers</div>
<div class="t" style="left:1414px;top:928px;font-size:24px;color:#1a2a4a;font-weight:normal;letter-spacing:0px;">2020-11-24 21:57:36</div>
<div class="t" style="left:1674px;top:929.8px;font-size:24px;color:#3366dd;font-weight:normal;letter-spacing:0px;">预览</div>
<div class="t" style="left:1741px;top:929.8px;font-size:24px;color:#3366dd;font-weight:normal;letter-spacing:0px;">处理</div>
<div style="position:absolute;left:550px;top:1046px;width:1324px;height:2px;background:#d6dbe3"></div>
<svg style="position:absolute;left:586px;top:1002px;" width="31" height="24" viewBox="0 0 31 24"><g fill="#2d62dc"><path d="M4 17.6 L8.7 9.3 L19 17.6 L26.8 4.1" fill="none" stroke="#2d62dc" stroke-width="2.4"/><circle cx="4" cy="17.6" r="3"/><circle cx="8.7" cy="9.3" r="3"/><circle cx="19" cy="17.6" r="3.2"/><circle cx="26.8" cy="4.1" r="3.8"/></g></svg>
<div class="t" style="left:634px;top:994px;font-size:24px;color:#1a2a4a;font-weight:normal;letter-spacing:0px;">公司…</div>
<svg style="position:absolute;left:732px;top:1000px;" width="29" height="29" viewBox="0 0 29 29"><circle cx="14.5" cy="14.5" r="14" fill="#3bb3a0"/><path d="M9.6 14.2 L14.2 18.3 L21 11.1" fill="none" stroke="#fff" stroke-width="2.3"/></svg>
<div class="t" style="left:772px;top:995.2px;font-size:24px;color:#1a2a4a;font-weight:normal;letter-spacing:0px;">已发布</div>
<div class="t" style="left:896px;top:994px;font-size:24px;color:#1a2a4a;font-weight:normal;letter-spacing:0px;">admin(admin)</div>
<div class="t" style="left:1242px;top:994px;font-size:24px;color:#1a2a4a;font-weight:normal;letter-spacing:0px;">superusers</div>
<div class="t" style="left:1414px;top:994px;font-size:24px;color:#1a2a4a;font-weight:normal;letter-spacing:0px;">2020-11-24 21:56:32</div>
<div class="t" style="left:1674px;top:995.8px;font-size:24px;color:#3366dd;font-weight:normal;letter-spacing:0px;">预览</div>
<div class="t" style="left:1741px;top:995.8px;font-size:24px;color:#3366dd;font-weight:normal;letter-spacing:0px;">处理</div>
<div style="position:absolute;left:550px;top:1050px;width:1324px;height:64px;background:#f7f8fc"></div>
<div style="position:absolute;left:550px;top:1112px;width:1324px;height:2px;background:#d6dbe3"></div>
<svg style="position:absolute;left:586px;top:1068px;" width="31" height="24" viewBox="0 0 31 24"><g fill="#2d62dc"><path d="M4 17.6 L8.7 9.3 L19 17.6 L26.8 4.1" fill="none" stroke="#2d62dc" stroke-width="2.4"/><circle cx="4" cy="17.6" r="3"/><circle cx="8.7" cy="9.3" r="3"/><circle cx="19" cy="17.6" r="3.2"/><circle cx="26.8" cy="4.1" r="3.8"/></g></svg>
<div class="t" style="left:634px;top:1060px;font-size:24px;color:#1a2a4a;font-weight:normal;letter-spacing:0px;">产品…</div>
<svg style="position:absolute;left:732px;top:1066px;" width="29" height="29" viewBox="0 0 29 29"><circle cx="14.5" cy="14.5" r="14" fill="#3bb3a0"/><path d="M9.6 14.2 L14.2 18.3 L21 11.1" fill="none" stroke="#fff" stroke-width="2.3"/></svg>
<div class="t" style="left:772px;top:1061.2px;font-size:24px;color:#1a2a4a;font-weight:normal;letter-spacing:0px;">已发布</div>
<div class="t" style="left:896px;top:1060px;font-size:24px;color:#1a2a4a;font-weight:normal;letter-spacing:0px;">admin(admin)</div>
<div class="t" style="left:1242px;top:1060px;font-size:24px;color:#1a2a4a;font-weight:normal;letter-spacing:0px;">superusers</div>
<div class="t" style="left:1414px;top:1060px;font-size:24px;color:#1a2a4a;font-weight:normal;letter-spacing:0px;">2020-11-23 14:59:46</div>
<div class="t" style="left:1674px;top:1061.8px;font-size:24px;color:#3366dd;font-weight:normal;letter-spacing:0px;">预览</div>
<div class="t" style="left:1741px;top:1061.8px;font-size:24px;color:#3366dd;font-weight:normal;letter-spacing:0px;">处理</div>
<div style="position:absolute;left:1878px;top:458px;width:12px;height:216px;background:#edeef2;border-radius:6px"></div>
<div style="position:absolute;left:548px;top:453px;width:1263px;height:67px;border:4px solid #fc262e;box-sizing:border-box"></div>
<div style="position:absolute;left:1506px;top:1134px;width:52px;height:51px;background:#f2f3f7;border:2px solid #e6e9ee;border-radius:4px;box-sizing:border-box"></div>
<svg style="position:absolute;left:1506px;top:1134px;" width="52" height="51" viewBox="0 0 52 51"><path d="M15 13 V38 M35 13 L22 25.5 L35 38" fill="none" stroke="#c9ced6" stroke-width="2.4"/></svg>
<div style="position:absolute;left:1568px;top:1134px;width:52px;height:51px;background:#f2f3f7;border:2px solid #e6e9ee;border-radius:4px;box-sizing:border-box"></div>
<svg style="position:absolute;left:1568px;top:1134px;" width="52" height="51" viewBox="0 0 52 51"><path d="M31 15 L21 25.5 L31 36" fill="none" stroke="#c9ced6" stroke-width="2.4"/></svg>
<div style="position:absolute;left:1630px;top:1136px;width:100px;height:48px;background:#fff;border:2px solid #ccd1d8;border-radius:4px;box-sizing:border-box"></div>
<div class="t" style="left:1643px;top:1141px;font-size:24px;color:#1a2a4a;font-weight:normal;letter-spacing:0px;">1</div>
<div class="t" style="left:1739px;top:1140px;font-size:24px;color:#1a2a4a;font-weight:normal;letter-spacing:0px;">/4</div>
<div style="position:absolute;left:1770px;top:1134px;width:52px;height:51px;background:#ffffff;border:2px solid #e6e9ee;border-radius:4px;box-sizing:border-box"></div>
<svg style="position:absolute;left:1770px;top:1134px;" width="52" height="51" viewBox="0 0 52 51"><path d="M20 15 L30 25.5 L20 36" fill="none" stroke="#0e1c3c" stroke-width="2.6"/></svg>
<div style="position:absolute;left:1832px;top:1134px;width:52px;height:51px;background:#ffffff;border:2px solid #e6e9ee;border-radius:4px;box-sizing:border-box"></div>
<svg style="position:absolute;left:1832px;top:1134px;" width="52" height="51" viewBox="0 0 52 51"><path d="M13 14 L30 25.5 L13 37 M37 14 V37" fill="none" stroke="#0e1c3c" stroke-width="2.6"/></svg>
<div style="position:absolute;left:1923.5px;top:1097.7px;width:44px;height:102px;background:#3a84f0;border-radius:50%"></div>
<svg style="position:absolute;left:1925px;top:1140px;" width="8" height="17" viewBox="0 0 8 17"><path d="M6 1 L2 8.5 L6 16" fill="none" stroke="#fff" stroke-width="1.5"/></svg>
<div style="position:absolute;left:10px;top:600px;width:143px;height:120px;border:4px solid #ff4545;box-sizing:border-box"></div>
<div style="position:absolute;left:151.0px;top:703.5px;width:40px;height:40px;border-radius:50%;background:#fc262e;color:#fff;font-size:30px;line-height:41px;text-align:center;font-family:Liberation Sans,sans-serif"><svg width="14" height="22" viewBox="0 0 14 22" style="vertical-align:-1px"><path d="M9.5 0.5 V21.5 M9.5 1 C8 4 5 6 1.5 7.5" fill="none" stroke="#fff" stroke-width="3"/></svg></div>
<div style="position:absolute;left:470.0px;top:322.0px;width:40px;height:40px;border-radius:50%;background:#fc262e;color:#fff;font-size:30px;line-height:41px;text-align:center;font-family:Liberation Sans,sans-serif">2</div>
<div style="position:absolute;left:504.0px;top:457.5px;width:40px;height:40px;border-radius:50%;background:#fc262e;color:#fff;font-size:30px;line-height:41px;text-align:center;font-family:Liberation Sans,sans-serif">3</div>
<div style="position:absolute;left:150px;top:1199px;width:1783px;height:1px;background:#9a9ea6"></div>
<div style="position:absolute;left:1903px;top:1170px;width:30px;height:30px;overflow:hidden"><div style="position:absolute;left:-30px;top:-30px;width:60px;height:60px;border-radius:10px;box-shadow:0 0 0 20px #9a9ea6"></div></div>
</body></html>
